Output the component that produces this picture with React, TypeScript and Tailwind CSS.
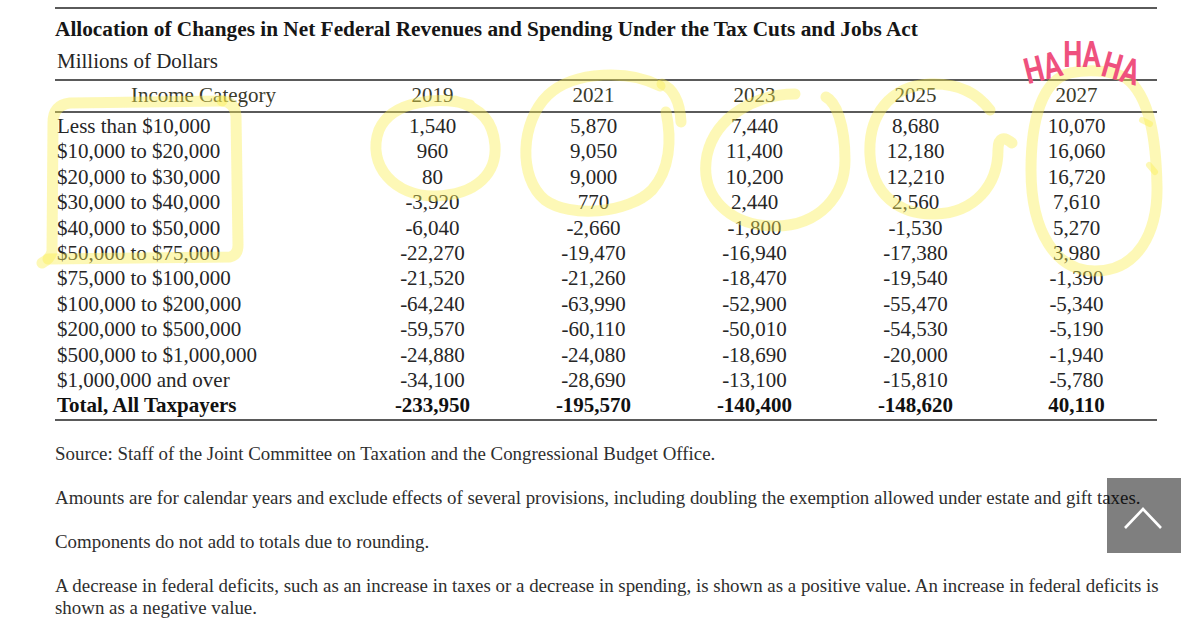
import React from "react";

const rows: string[][] = [
  ["Less than $10,000", "1,540", "5,870", "7,440", "8,680", "10,070"],
  ["$10,000 to $20,000", "960", "9,050", "11,400", "12,180", "16,060"],
  ["$20,000 to $30,000", "80", "9,000", "10,200", "12,210", "16,720"],
  ["$30,000 to $40,000", "-3,920", "770", "2,440", "2,560", "7,610"],
  ["$40,000 to $50,000", "-6,040", "-2,660", "-1,800", "-1,530", "5,270"],
  ["$50,000 to $75,000", "-22,270", "-19,470", "-16,940", "-17,380", "3,980"],
  ["$75,000 to $100,000", "-21,520", "-21,260", "-18,470", "-19,540", "-1,390"],
  ["$100,000 to $200,000", "-64,240", "-63,990", "-52,900", "-55,470", "-5,340"],
  ["$200,000 to $500,000", "-59,570", "-60,110", "-50,010", "-54,530", "-5,190"],
  ["$500,000 to $1,000,000", "-24,880", "-24,080", "-18,690", "-20,000", "-1,940"],
  ["$1,000,000 and over", "-34,100", "-28,690", "-13,100", "-15,810", "-5,780"],
];
const total = ["Total, All Taxpayers", "-233,950", "-195,570", "-140,400", "-148,620", "40,110"];
const years = ["2019", "2021", "2023", "2025", "2027"];

function Row({ cells, bold }: { cells: string[]; bold?: boolean }) {
  return (
    <div className={"grid grid-cols-[297px_repeat(5,161px)] h-[25.4px] leading-[25.4px] " + (bold ? "font-bold text-[#111]" : "")}>
      <div className="pl-[2px] whitespace-nowrap">{cells[0]}</div>
      {cells.slice(1).map((c, i) => (
        <div key={i} className="text-center whitespace-nowrap">{c}</div>
      ))}
    </div>
  );
}

function Scribbles() {
  return (
    <svg className="absolute inset-0 pointer-events-none" width="1200" height="629" viewBox="0 0 1200 629">
      <g fill="none" stroke="rgb(250,238,80)" strokeOpacity="0.42" strokeWidth="11" strokeLinecap="round" strokeLinejoin="round">
        {/* bracket around income labels */}
        <path d="M 222 101 L 70 103 Q 53 105 53 123 L 52 252 Q 50 259 42 263" />
        <path d="M 48 259 L 230 257 Q 238 255 238 245 L 236 116 Q 235 102 222 101" />
        {/* 2019 */}
        <path d="M 470 105 C 440 96, 392 100, 379 130 C 366 165, 395 197, 435 196 C 478 195, 497 172, 495 145 C 493 122, 482 108, 455 101" />
        {/* 2021 */}
        <path d="M 660 86 C 630 70, 575 70, 548 95 C 520 122, 518 178, 545 200 C 570 218, 628 214, 652 190 C 670 170, 672 140, 666 112" />
        <path d="M 662 84 C 672 88, 680 100, 681 122" />
        {/* 2023 */}
        <path d="M 795 94 C 758 94, 716 115, 707 155 C 699 197, 730 226, 775 226 C 820 226, 845 195, 845 160 C 845 125, 836 102, 826 97" />
        {/* 2025 */}
        <path d="M 990 110 C 975 90, 955 83, 930 84 C 890 86, 868 115, 870 155 C 872 195, 900 215, 935 214 C 975 213, 998 185, 998 150 C 998 137, 1004 136, 1012 143" />
        {/* 2027 */}
        <path d="M 1070 73 C 1042 80, 1031 120, 1031 170 C 1031 232, 1056 271, 1095 271 C 1138 271, 1158 232, 1157 186 C 1156 140, 1150 96, 1126 78 C 1110 70, 1088 69, 1070 73" />
        <path d="M 1142 120 L 1150 124" strokeWidth="6" />
        <path d="M 1149 165 L 1155 172" strokeWidth="6" />
      </g>
    </svg>
  );
}

function Laugh() {
  const base =
    "absolute w-[60px] text-center leading-none text-[36px] font-bold text-[#ef517e] font-['Roboto',sans-serif] scale-x-[0.75]";
  return (
    <>
      <span className={base + " left-[1013px] top-[50px] rotate-[-14deg]"}>HA</span>
      <span className={base + " left-[1052px] top-[37px]"}>HA</span>
      <span className={base + " left-[1091px] top-[51px] rotate-[16deg]"}>HA</span>
    </>
  );
}

export default function App() {
  return (
    <div className="relative w-[1200px] h-[629px] overflow-hidden bg-white font-['Liberation_Serif','Times_New_Roman',serif] text-[#262626]">
      <div className="ml-[55px] w-[1102px] pt-[7px]">
        <div className="border-t-2 border-[#5a5a5a]" />
        <div className="mt-[8px] text-[21.3px] leading-[25px] font-bold text-[#161616] whitespace-nowrap">
          Allocation of Changes in Net Federal Revenues and Spending Under the Tax Cuts and Jobs Act
        </div>
        <div className="mt-[7px] text-[21px] leading-[25px] pl-[2px]">Millions of Dollars</div>
        <div className="mt-[5px] border-t-2 border-[#5a5a5a]" />
        <div className="text-[21px]">
          <div className="grid grid-cols-[297px_repeat(5,161px)] leading-[25px] pt-[2px] pb-[3px] border-b-2 border-[#5a5a5a] text-[#3a3a2a]">
            <div className="text-center">Income Category</div>
            {years.map((y) => (
              <div key={y} className="text-center">{y}</div>
            ))}
          </div>
          <div className="pt-[1px] border-b-2 border-[#5a5a5a]">
            {rows.map((r, i) => (
              <Row key={i} cells={r} />
            ))}
            <Row cells={total} bold />
          </div>
        </div>
        <div className="flex flex-col gap-[22px] pt-[22px] text-[18.9px] leading-[22px] text-[#2e2e2e]">
          <p>Source: Staff of the Joint Committee on Taxation and the Congressional Budget Office.</p>
          <p className="whitespace-nowrap">
            Amounts are for calendar years and exclude effects of several provisions, including doubling the exemption allowed under estate and gift taxes.
          </p>
          <p>Components do not add to totals due to rounding.</p>
          <p className="whitespace-nowrap">
            A decrease in federal deficits, such as an increase in taxes or a decrease in spending, is shown as a positive value. An increase in federal deficits is
            <br />
            shown as a negative value.
          </p>
        </div>
      </div>

      <Scribbles />
      <Laugh />

      <button className="absolute left-[1107px] top-[478px] w-[74px] h-[75px] bg-black/50 flex items-center justify-center">
        <svg width="74" height="75" viewBox="0 0 74 75">
          <polyline points="18,50 36,31 54,50" fill="none" stroke="white" strokeWidth="2.6" />
        </svg>
      </button>
    </div>
  );
}
